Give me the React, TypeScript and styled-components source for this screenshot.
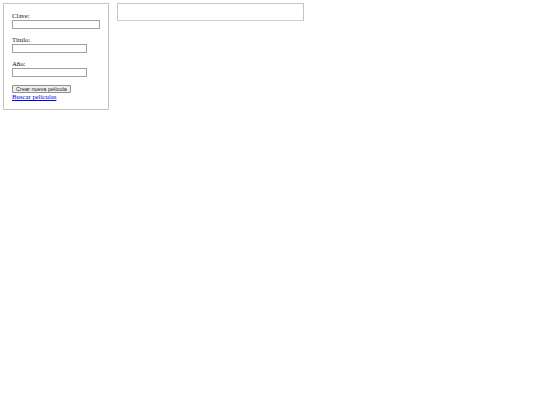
import React from "react";
import styled, { createGlobalStyle } from "styled-components";

const Global = createGlobalStyle`
  html, body { margin: 0; padding: 0; background: #fff; }
  body { font-family: "Liberation Serif", "Times New Roman", serif; color: #000; }
`;

const Page = styled.div`
  display: flex;
  align-items: flex-start;
  gap: 8px;
  padding: 3px;
`;

const FormPanel = styled.form`
  box-sizing: border-box;
  width: 106px;
  height: 107px;
  border: 1px solid #c4c4c4;
  padding: 8px 8px 0 8px;
  display: flex;
  flex-direction: column;
`;

const Field = styled.div`
  display: flex;
  flex-direction: column;
  margin-bottom: 7px;
`;

const Label = styled.label`
  font-size: 6.75px;
  line-height: 8px;
  color: #111;
`;

const TextInput = styled.input<{ $w: number }>`
  box-sizing: border-box;
  width: ${(p) => p.$w}px;
  height: 9px;
  margin: 0;
  padding: 0;
  border: 1px solid #a0a0a0;
  background: #fff;
  font-size: 5.6px;
`;

const Button = styled.button`
  box-sizing: border-box;
  align-self: flex-start;
  width: 59px;
  height: 8px;
  margin: 1px 0 0 0;
  padding: 0;
  font-family: "Liberation Sans", Arial, sans-serif;
  font-size: 5.5px;
  line-height: 6px;
  white-space: nowrap;
  color: #222;
  background: #efefef;
  border: 1px solid #909090;
  border-radius: 1px;
`;

const Link = styled.a`
  font-size: 6.75px;
  line-height: 8px;
  color: #0000ee;
  text-decoration: underline;
`;

const ResultBox = styled.div`
  box-sizing: border-box;
  width: 187px;
  height: 18px;
  border: 1px solid #c4c4c4;
  border-bottom-color: #cfcfcf;
`;

export default function App() {
  return (
    <>
      <Global />
      <Page>
        <FormPanel onSubmit={(e) => e.preventDefault()}>
          <Field>
            <Label>Clave:</Label>
            <TextInput $w={88} />
          </Field>
          <Field>
            <Label>Título:</Label>
            <TextInput $w={75} />
          </Field>
          <Field>
            <Label>Año:</Label>
            <TextInput $w={75} />
          </Field>
          <Button type="button">Crear nueva película</Button>
          <Link href="#">Buscar películas</Link>
        </FormPanel>
        <ResultBox />
      </Page>
    </>
  );
}
